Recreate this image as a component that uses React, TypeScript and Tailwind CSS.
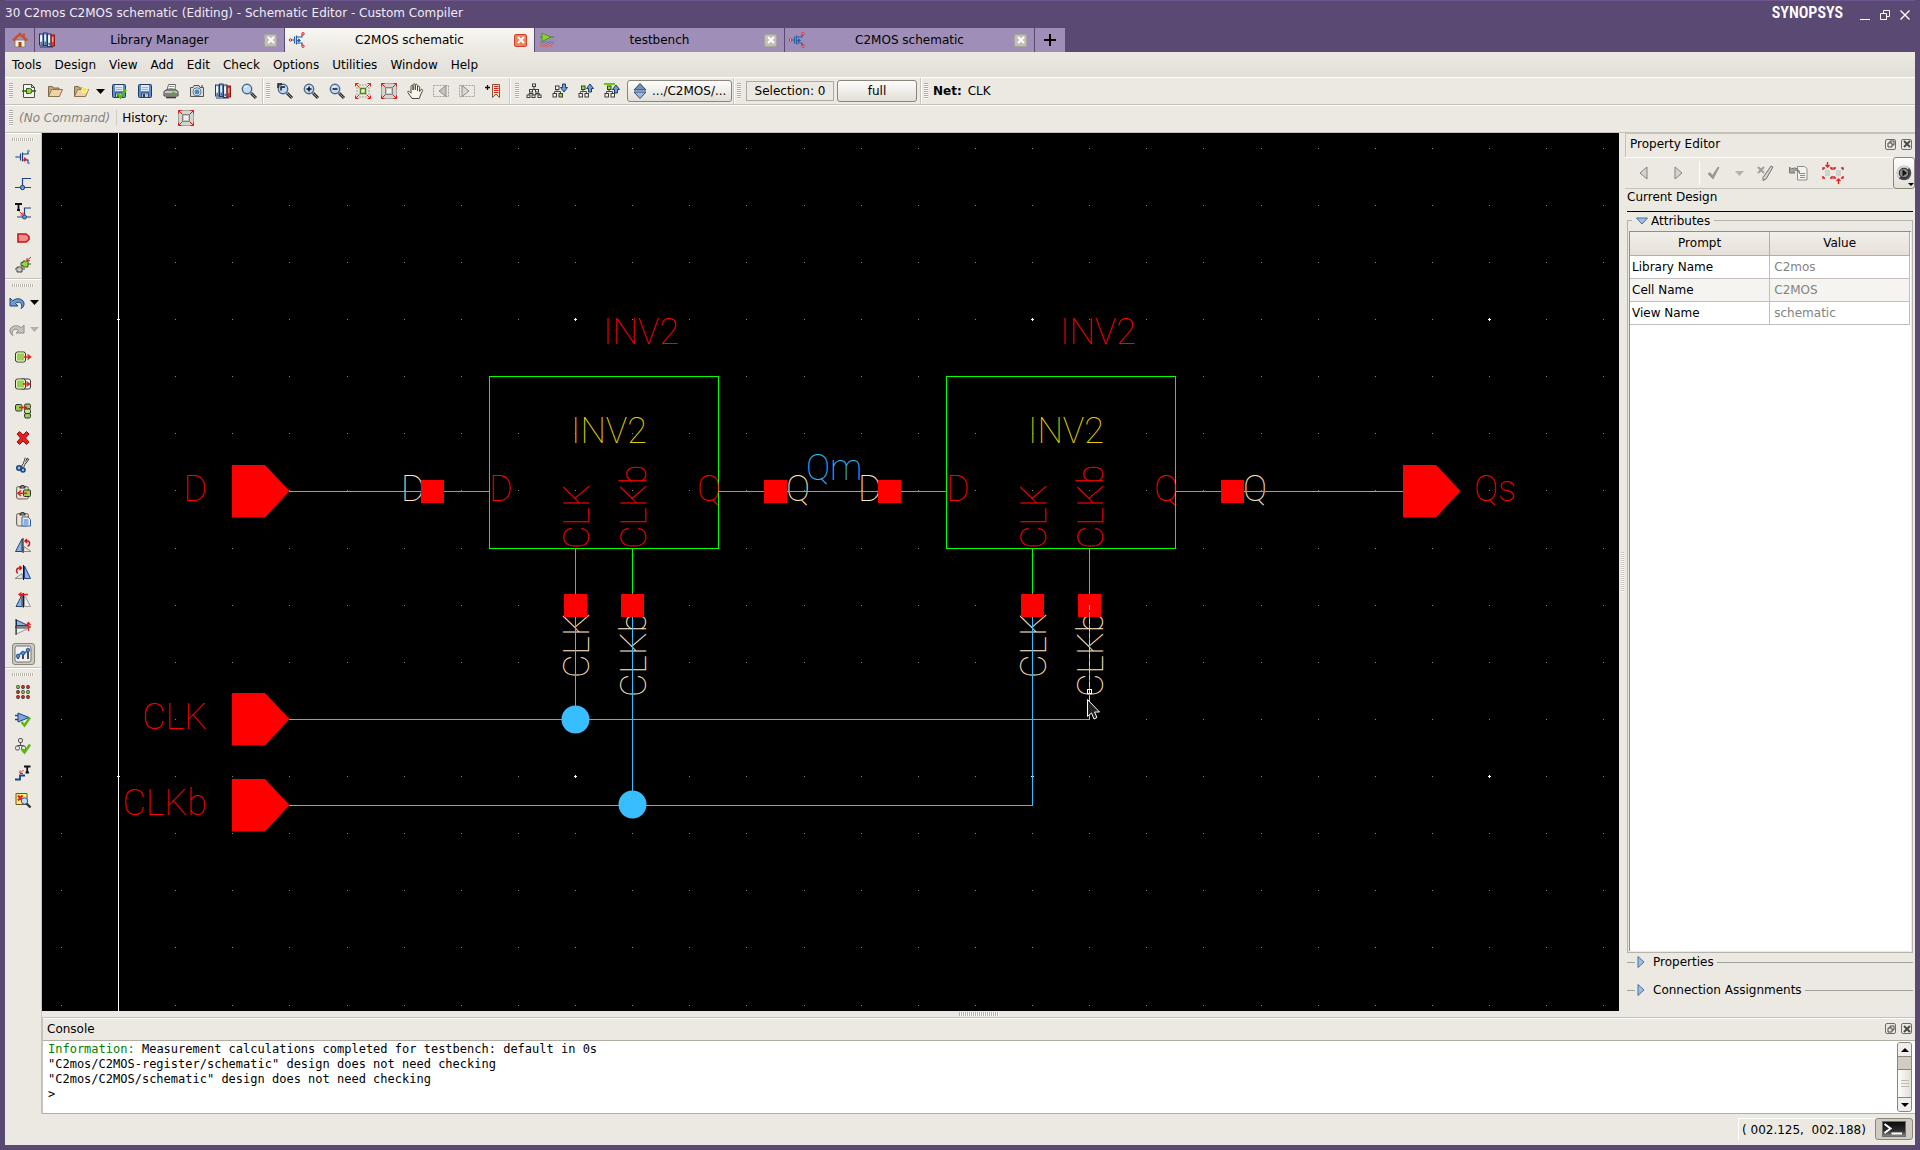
import React from "react";

type Node = React.ReactNode;

/* ---------- icon building blocks ---------- */

const folder = (
  <>
    <path d="M1.5 13.5v-10h4l1 1.5h5.5v2" fill="#c9a877" stroke="#7a6a52" />
    <path d="M1.5 13.5l3-7h11l-3 7z" fill="#f0d3a4" stroke="#8a7353" />
  </>
);
const floppy = (
  <>
    <rect x="1.5" y="1.5" width="13" height="13" rx="1" fill="#5f8fca" stroke="#1f3c66" />
    <rect x="4" y="2" width="8" height="6" fill="#dfe9f5" />
    <path d="M5 4.500h6M5 6.500h6" stroke="#9db4d0" />
    <rect x="4.500" y="10" width="7" height="4.500" fill="#bfc7d2" stroke="#2b4a78" />
    <rect x="6" y="11" width="2" height="3" fill="#2b3a52" />
  </>
);
const lens = (
  <>
    <path d="M10 10l5 5" stroke="#2b2b2b" strokeWidth="3" />
    <path d="M10 10l5 5" stroke="#9a9a9a" strokeWidth="1" />
    <circle cx="6" cy="6" r="4.700" fill="#c3dbf5" stroke="#4a6890" strokeWidth="1.400" />
    <path d="M3.500 5a3 3 0 0 1 3-2" stroke="#ffffff" fill="none" />
  </>
);
const cornerArrows = (
  <path
    d="M.500 3.500V.500h3M1 1l3.500 3.500M12.500.500h3v3M15 1l-3.500 3.500M.500 12.500v3h3M1 15l3.500-3.500M15.500 12.500v3h-3M15 15l-3.500-3.500"
    stroke="#e01818"
    fill="none"
  />
);
const books = (
  <>
    <rect x=".5" y="2" width="3.500" height="11" fill="#c9d9ec" stroke="#1c3a66" />
    <rect x="4.500" y="1" width="3.500" height="12.500" fill="#8db0db" stroke="#1c3a66" />
    <rect x="8.500" y="2" width="3.500" height="12.500" fill="#c9d9ec" stroke="#1c3a66" />
    <rect x="12" y="3" width="3.500" height="11" fill="#e23a2a" stroke="#8c1a12" />
    <path d="M2.200 4v5M6.200 3v6M10.200 4v6" stroke="#ffffff" strokeWidth="1.400" />
    <path d="M2.200 10v2M6.200 10.500v2M10.200 11v2" stroke="#1c3a66" />
    <path d="M13.800 5v5" stroke="#ffc9c0" />
    <path d="M1 15h13" stroke="#1c3a66" />
  </>
);
const tree = (a: string, b: string) => (
  <>
    <path d="M5 5v3M2.500 11V8.500h6V11" fill="none" stroke="#4a4a4a" />
    <rect x="3.500" y="3" width="3.500" height="3.500" fill={a} stroke="#3d3d3d" />
    <rect x="1" y="10.500" width="3.500" height="3.500" fill="#f2f2f2" stroke="#3d3d3d" />
    <rect x="7" y="10.500" width="3.500" height="3.500" fill={b} stroke="#3d3d3d" />
  </>
);
const check = <path d="M6.500 11l3 3.500L15 6.500" fill="none" stroke="#57b80e" strokeWidth="2.400" />;
const clipboard = (
  <>
    <rect x="1.500" y="2.500" width="12" height="12.500" rx="2" fill="#e4c9ae" stroke="#6b6b6b" />
    <path d="M3 4h9v10H3z" fill="#f0e3d5" />
    <path d="M4.500 4.500V2.500l2-1.500h2l2 1.500v2z" fill="#3a3a3a" />
    <path d="M6.500 3h2" stroke="#ddd" />
  </>
);

const ICONS: Record<string, Node> = {
  home: (
    <>
      <path d="M3 8h10v7H3z" fill="#f3efe6" stroke="#8b8378" />
      <path d="M1 8.500L8 2l7 6.500" fill="none" stroke="#c8502b" strokeWidth="2.600" />
      <path d="M11 1.500h2V5h-2z" fill="#c8502b" />
      <path d="M6.500 10h3v5h-3z" fill="#a14a1c" />
    </>
  ),
  library: books,
  transistorTab: (
    <>
      <path d="M2 8h3M5.500 4.500v7M7.500 3.500v9M7.500 5H13V2.500M7.500 11H13v2.500" fill="none" stroke="#2a5ea6" strokeWidth="1.200" />
      <path d="M8 8.500h3M9.500 7l2 1.500-2 1.500z" stroke="#2a5ea6" fill="#2a5ea6" />
      <circle cx="1.500" cy="8" r="1.200" fill="#fff" stroke="#d81010" />
      <circle cx="14" cy="1.800" r="1.200" fill="#fff" stroke="#d81010" />
      <circle cx="14" cy="14.200" r="1.200" fill="#fff" stroke="#d81010" />
    </>
  ),
  testbench: (
    <>
      <path d="M1 5h14" stroke="#4c7a2d" />
      <path d="M3 1l9 4-9 4.500z" fill="#8ccf3a" stroke="#4f9320" />
      <path d="M1 10.500l2-1 2 1 2-1 2 1 2-1 2 1 2-1" fill="none" stroke="#5c7ca8" />
      <path d="M1 12.500l2-1 2 1 2-1 2 1 2-1 2 1 2-1M1 14.500l2-1 2 1 2-1 2 1 2-1 2 1" fill="none" stroke="#d9634c" />
    </>
  ),
  new: (
    <>
      <path d="M2.500 1.500h8l3 3v10h-11z" fill="#f5f5f0" stroke="#4d4d4d" />
      <path d="M10.500 1.500v3h3" fill="none" stroke="#4d4d4d" />
      <path d="M5.500 5.500h3a2.500 2.500 0 0 1 0 5h-3z" fill="#9ad14a" stroke="#2f5e10" />
      <path d="M1 8h4M11 8h4" stroke="#2f5e10" strokeWidth="1.400" />
    </>
  ),
  open: folder,
  openRecent: (
    <>
      {folder}
      <circle cx="11.500" cy="7" r="2.800" fill="#ffe14a" stroke="#fff7c0" />
    </>
  ),
  saveCheck: (
    <>
      {floppy}
      {check}
    </>
  ),
  save: floppy,
  print: (
    <>
      <path d="M4 7l1.500-5.500h7L12 7z" fill="#ffffff" stroke="#6a6a6a" />
      <path d="M6 3.500h5M5.500 5.500h5" stroke="#9a9a9a" />
      <path d="M1 8.500L3 7h10l2 1.500V13H1z" fill="#c8c8c4" stroke="#3a3a3a" />
      <path d="M2 11h12" stroke="#3a3a3a" />
      <path d="M3 14.500h10" stroke="#3a3a3a" strokeWidth="1.600" />
      <path d="M9 9.500h3" stroke="#5cb82a" strokeWidth="1.400" />
    </>
  ),
  camera: (
    <>
      <path d="M1.500 4.500H4l1-2h5l1 2h3.500v9h-13z" fill="#d9dcd8" stroke="#555" />
      <circle cx="8" cy="8.800" r="4" fill="#fff" stroke="#5b6f8a" />
      <circle cx="8" cy="8.800" r="2.600" fill="#4f87cc" />
      <path d="M12 3h2" stroke="#333" />
    </>
  ),
  books,
  search: lens,
  zoomArea: (
    <>
      {lens}
      <path d="M1 5V1h4M4 7.500V4h4" fill="none" stroke="#111" strokeWidth="1.400" />
    </>
  ),
  zoomIn: (
    <>
      {lens}
      <path d="M3.500 6h5M6 3.500v5" stroke="#111" strokeWidth="1.500" />
    </>
  ),
  zoomOut: (
    <>
      {lens}
      <path d="M3.500 6h5" stroke="#111" strokeWidth="1.500" />
    </>
  ),
  fitAll: (
    <>
      <path d="M2 4v8M14 4v8M4 2h8M4 14h8" stroke="#a9968a" strokeDasharray="2 1" />
      {cornerArrows}
      <rect x="5.500" y="5.500" width="5" height="5" fill="#f3f7ec" stroke="#4d8a17" strokeWidth="1.600" />
    </>
  ),
  fitSel: (
    <>
      <rect x=".5" y=".5" width="15" height="15" fill="#d6d4cf" stroke="#a5a39e" />
      {cornerArrows}
      <rect x="4.500" y="4.500" width="7" height="7" fill="#c9c7c2" stroke="#85837e" />
      <rect x="6" y="6" width="4" height="4" fill="#f2f2f0" />
    </>
  ),
  hand: (
    <path
      d="M5 15.500L.800 9.500c-.5-1 .8-1.900 1.700-.9L4 10.200V3.500c0-1.400 2-1.400 2.100 0V7V1.800c0-1.400 2.100-1.400 2.200 0v5V2.300c0-1.300 2.100-1.300 2.200 0V8V4.200c0-1.300 2.100-1.300 2.100 0V8.500l1.200-1.800c.8-1 2.200-.3 1.800.9L13.500 12l-1.200 3.500z"
      fill="#fbf5e9"
      stroke="#4f4a40"
    />
  ),
  prevView: (
    <>
      <path d="M.500 2.500h15v11H.500z" fill="none" stroke="#a5a39c" strokeDasharray="2 1" />
      <path d="M13 2.500v11L6 8z" fill="#c5c3bd" stroke="#8f8d87" />
    </>
  ),
  nextView: (
    <>
      <path d="M.500 2.500h15v11H.500z" fill="none" stroke="#a5a39c" strokeDasharray="2 1" />
      <path d="M3 2.500v11L10 8z" fill="#d9d7d1" stroke="#8f8d87" />
    </>
  ),
  bookmark: (
    <>
      <path d="M0 4.500h5M2.500 2v5" stroke="#111" strokeWidth="1.300" />
      <path d="M7.500 1.500h7v13L11 11l-3.500 3.500z" fill="#f6dfb8" stroke="#7d5530" />
      <path d="M9 3.500h4.500M9 5.500h4.500M9 7.500h4.500M9 9.500h4.500" stroke="#d81f1f" />
    </>
  ),
  hierarchy: (
    <g fill="#f2f2f2" stroke="#3d3d3d">
      <path d="M8 4v2M5 8V6.500h6V8M3 12v-1.500h4V12M11 10v2M9.500 12v-1.500h4V12" fill="none" />
      <rect x="6.500" y="1" width="3" height="2.500" />
      <rect x="3.500" y="6.500" width="3" height="2.500" />
      <rect x="9.500" y="6.500" width="3" height="2.500" />
      <rect x="1" y="12" width="3" height="2.500" />
      <rect x="6" y="12" width="3" height="2.500" />
      <rect x="12" y="12" width="3" height="2.500" />
    </g>
  ),
  descend: (
    <>
      {tree("#f2f2f2", "#8fe03a")}
      <path d="M10.500 1h3v3.500h2L12 9 8.500 4.500h2z" fill="#6f9fd8" stroke="#1f3c66" />
    </>
  ),
  ascend: (
    <>
      {tree("#8fe03a", "#f2f2f2")}
      <path d="M10.500 9h3V5.500h2L12 1 8.500 5.500h2z" fill="#6f9fd8" stroke="#1f3c66" />
    </>
  ),
  ascendTop: (
    <>
      <path d="M0 1h11" stroke="#6cc418" strokeWidth="2" />
      {tree("#8fe03a", "#f2f2f2")}
      <path d="M10.500 10h3V6.500h2L12 2 8.500 6.500h2z" fill="#6f9fd8" stroke="#1f3c66" />
    </>
  ),
  transistor: (
    <>
      <path d="M1 8h4M5.500 4.500v7M7.500 3.500v9M7.500 5H13V2M7.500 11H13v3" fill="none" stroke="#1d4382" strokeWidth="1.200" />
      <path d="M9 8v5l3.500-2.500z" fill="#e02020" />
      <circle cx="1.500" cy="8" r="1.300" fill="#7298c8" />
      <circle cx="13.500" cy="2" r="1.300" fill="#7298c8" />
      <circle cx="13.500" cy="14" r="1.300" fill="#7298c8" />
    </>
  ),
  wire: (
    <>
      <path d="M0 11.500h16M7.500 11V2.500H16" fill="none" stroke="#1d4382" strokeWidth="1.200" />
      <circle cx="7.500" cy="11.500" r="2.200" fill="#7298c8" stroke="#1d4382" />
    </>
  ),
  wireName: (
    <>
      <path d="M0 1h7M3.500 1v6M2 7h3" stroke="#111" strokeWidth="1.800" fill="none" />
      <path d="M2 14h14M9.500 13V5H16" fill="none" stroke="#1d4382" strokeWidth="1.200" />
      <path d="M4.500 8.500l3 3M8 9.500V12H5.500" stroke="#e02020" fill="none" />
      <circle cx="9.500" cy="14" r="2" fill="#7298c8" stroke="#1d4382" />
    </>
  ),
  pin: <path d="M3 4h8l3 2.500v3L11 12H3z" fill="#f08c8c" stroke="#c81414" strokeWidth="1.600" />,
  connector: (
    <>
      <path d="M6 5.500h2V4h5v6H8V8.500H6zM13 7h3" fill="#9ad14a" stroke="#33600f" />
      <path d="M0 12h2v-2h5v5H2v-2M7 12h3" fill="#c9c9c9" stroke="#444" />
      <path d="M16 0l-4 3.500M12 1v2.700h3" stroke="#e02020" fill="none" />
    </>
  ),
  undo: (
    <path d="M1 3v8h8L6.500 8.500c2-2 5-1.500 6 .5.600 1.500.3 3-.5 4.500 3-1.500 4-5 2-7.500C11.500 3 7 3 3.800 5.800z" fill="#6f9bd1" stroke="#1f4275" />
  ),
  redo: (
    <path d="M15 3v8H7l2.500-2.500c-2-2-5-1.500-6 .5-.6 1.500-.3 3 .5 4.500C1 12 0 8.500 2 6c2.500-3 7-3 10.200-.2z" fill="#c5c3bd" stroke="#8f8d87" />
  ),
  move: (
    <>
      <rect x=".5" y="3" width="10" height="10" rx="2" fill="#9ccf4e" stroke="#333" />
      <rect x="1.500" y="4" width="8" height="8" rx="1" stroke="#e4f2cc" />
      <path d="M9 8h6M12.500 5.500L15.500 8l-3 2.500" stroke="#e02020" fill="none" strokeWidth="1.400" />
    </>
  ),
  copy: (
    <>
      <rect x="5.500" y="3" width="10" height="10" rx="2" fill="#fff" stroke="#333" />
      <rect x=".5" y="3" width="10" height="10" rx="2" fill="#9ccf4e" stroke="#333" />
      <rect x="1.500" y="4" width="8" height="8" rx="1" stroke="#e4f2cc" />
      <path d="M8 8h6M11.500 5.500L14.500 8l-3 2.500" stroke="#e02020" fill="none" strokeWidth="1.400" />
    </>
  ),
  array: (
    <>
      <rect x=".5" y="1.500" width="6.500" height="6.500" rx="1.500" fill="#9ccf4e" stroke="#333" />
      <rect x="9.500" y="1" width="6" height="5" rx="1.500" fill="#9ccf4e" stroke="#333" />
      <rect x="9.500" y="6" width="6" height="4.500" rx="1.500" fill="#c5e49a" stroke="#333" />
      <rect x="9.500" y="10.500" width="6" height="4.500" rx="1.500" fill="#9ccf4e" stroke="#333" />
      <path d="M4 4.500h7M9 2.500l2.500 2L9 6.500" stroke="#e02020" fill="none" strokeWidth="1.300" />
    </>
  ),
  delete: (
    <path d="M2 4l2.500-2.500L8 5l3.500-3.500L14 4l-3.500 4L14 12l-2.500 2.500L8 11l-3.500 3.500L2 12l3.500-4z" fill="#e22020" stroke="#9e0e0e" />
  ),
  cut: (
    <>
      <path d="M13.500 1.500L6 11M11 1L8 10" stroke="#333" strokeWidth="2.400" />
      <path d="M13.500 1.500L6 11M11 1L8 10" stroke="#d7d7d7" strokeWidth="1" />
      <circle cx="4" cy="11" r="2.200" fill="#9bbce2" stroke="#1d4382" strokeWidth="1.600" />
      <circle cx="8" cy="13" r="2" fill="#9bbce2" stroke="#1d4382" strokeWidth="1.600" />
    </>
  ),
  clipCopy: (
    <>
      {clipboard}
      <rect x="8.500" y="6" width="7" height="6.500" rx="1" fill="#9ccf4e" stroke="#333" />
      <path d="M12 9.300H3M6 6.500L3 9.300l3 2.700" stroke="#e02020" fill="none" strokeWidth="1.500" />
    </>
  ),
  paste: (
    <>
      {clipboard}
      <path d="M7 6h6l2.500 2.500V15H7z" fill="#eef4fb" stroke="#2a5ea6" />
      <path d="M8.500 9h5M8.500 11h5M8.500 13h5" stroke="#2a6ac4" />
    </>
  ),
  rotateLeft: (
    <>
      <path d="M.500 13.500h6.500V1z" fill="#8fb3e0" stroke="#1d4382" />
      <path d="M8.500 13.500H16L9 8.500z" fill="#e6e6e6" stroke="#8a8a8a" />
      <path d="M8 0v15" stroke="#111" />
      <path d="M10 3h2.500c3 0 2.500 5 0 5M12 1l-2 2 2 2" stroke="#cc1414" fill="none" strokeWidth="1.500" />
    </>
  ),
  rotateRight: (
    <>
      <path d="M15.500 13.500H9.500V1z" fill="#8fb3e0" stroke="#1d4382" />
      <path d="M7.500 13.500H0l7-5z" fill="#e6e6e6" stroke="#8a8a8a" />
      <path d="M8.500 0v15" stroke="#111" />
      <path d="M6.500 3H4C1 3 1 8 3 8M4.500 1l2 2-2 2" stroke="#cc1414" fill="none" strokeWidth="1.500" />
    </>
  ),
  flipH: (
    <>
      <path d="M1 14.500h6V3z" fill="#8fb3e0" stroke="#1d4382" />
      <path d="M15.500 14.500h-6V3z" fill="#eee" stroke="#9a9a9a" />
      <path d="M8.300 1v14.500" stroke="#111" strokeWidth="1.300" />
      <path d="M13 2.500H4M6.500.5L4 2.500l2.500 2" stroke="#e02020" fill="none" strokeWidth="1.300" />
    </>
  ),
  flipV: (
    <>
      <path d="M1.500 1v5.500H13z" fill="#8fb3e0" stroke="#1d4382" />
      <path d="M1.500 15V9.500H13z" fill="#eee" stroke="#9a9a9a" />
      <path d="M0 8h16M1 0v16" stroke="#111" />
      <path d="M13.500 12V4M11.500 6l2-2.500 2 2.500" stroke="#e02020" fill="none" strokeWidth="1.300" />
    </>
  ),
  sliders: (
    <>
      <rect x="0" y="0" width="16" height="16" rx="2" fill="#eef0f2" stroke="#777" />
      <path d="M3 8v5M8 5v8M13 3v10" stroke="#222" strokeWidth="1.600" />
      <path d="M2 11l4-4 3 1 5-5" stroke="#2a5ea6" fill="none" strokeWidth="1.500" />
      <circle cx="3" cy="10" r="1.800" fill="#5e88bc" stroke="#2a5ea6" />
      <circle cx="8" cy="7" r="1.800" fill="#5e88bc" stroke="#2a5ea6" />
      <circle cx="13" cy="4" r="1.800" fill="#5e88bc" stroke="#2a5ea6" />
    </>
  ),
  dots: (
    <>
      {[3, 8, 13].map((y, r) =>
        [3, 8, 13].map((x, c) => (
          <g key={`${x}-${y}`}>
            <circle cx={x} cy={y} r="1.900" fill="#333" />
            <circle cx={x} cy={y} r="1.300" fill={(r === 0 && c === 0) || (r === 1 && c > 0) ? "#6cc430" : "#e02020"} />
          </g>
        )),
      )}
    </>
  ),
  checkGate: (
    <>
      <path d="M3 2l11 4.500L3 11z" fill="#7ba6dc" stroke="#1d4382" />
      <path d="M0 4.500h3M0 8.500h3" stroke="#1d4382" strokeWidth="1.500" />
      {check}
    </>
  ),
  checkTree: (
    <>
      <path d="M5.500 4v3M2.500 9V7.500h6V9" stroke="#555" fill="none" />
      <rect x="3.500" y=".5" width="4" height="4" rx="1.500" fill="#e8e8e8" stroke="#555" />
      <rect x=".5" y="8" width="4" height="4" rx="1.500" fill="#e8e8e8" stroke="#555" />
      <rect x="6.500" y="8" width="4" height="4" rx="1.500" fill="#e8e8e8" stroke="#555" />
      {check}
    </>
  ),
  netName: (
    <>
      <path d="M0 14.500h5v-4h5" stroke="#1d4382" fill="none" strokeWidth="1.800" />
      <path d="M9 1.500h6.500M12.200 1.500v6M10.500 7.500h3.500" stroke="#111" fill="none" strokeWidth="1.800" />
      <path d="M8.500 5L5.500 8M5 5.500v3h3" stroke="#e02020" fill="none" />
    </>
  ),
  markers: (
    <>
      <path d="M1 1.500h11v11H1z" fill="#fff07a" stroke="#6b5a1c" />
      <path d="M3 3.500l4.500 5M7.500 3.500L3 8.500" stroke="#e02020" strokeWidth="2" />
      <path d="M11 11l4.500 4.500" stroke="#333" strokeWidth="2.400" />
      <circle cx="9.500" cy="9" r="3.200" fill="#c3dbf5" stroke="#31588f" />
    </>
  ),
  updown: (
    <>
      <path d="M8 .5L14 7H2z" fill="#6d8fbd" stroke="#2b456e" />
      <path d="M8 15.500L14 9H2z" fill="#9dbbe2" stroke="#2b456e" />
    </>
  ),
  back: <path d="M11 2v12L4 8z" fill="#d5d3ce" stroke="#85837e" />,
  forward: <path d="M5 2v12l7-6z" fill="#d5d3ce" stroke="#85837e" />,
  apply: <path d="M3 9l2-1.500 2.500 3L13 2l1 .5L8 14z" fill="#9a9892" stroke="#8a8882" strokeWidth=".6" />,
  discard: (
    <>
      <path d="M1 2l6 6M7 2L1 8" stroke="#a09e98" strokeWidth="2" />
      <path d="M14 1l2 1-7 12-3 1.500 0-3z" fill="#d5d3ce" stroke="#74726d" />
    </>
  ),
  revert: (
    <>
      <path d="M6.500 1.500h7l2.500 2V15H6.500z" fill="#f3f2ee" stroke="#8f8d87" />
      <path d="M9 8.500h5M9 10.500h5M9 12.500h5" stroke="#8f8d87" />
      <path d="M-1.500 2v6h5.500L2.500 6.500c3-2 5-1 6 2C8.500 4 4.500 1.500.500 4z" fill="#a8a69f" stroke="#77756f" />
    </>
  ),
  options: (
    <>
      <circle cx="8" cy="8" r="7.300" fill="#4a4a4a" />
      <path d="M2.800 13.200A7.300 7.300 0 0 1 13.200 2.800z" fill="#d6d6d6" />
      <circle cx="8" cy="8" r="4.800" fill="#8a8a8a" stroke="#222" />
      <path d="M6.500 4.500v7l4.500-3.500z" fill="#111" />
    </>
  ),
};

function Icon({ name }: { name: string }) {
  return (
    <svg viewBox="0 0 16 16" className="size-4 shrink-0 overflow-visible" fill="none" aria-hidden="true">
      {ICONS[name]}
    </svg>
  );
}

function IconButton({ name, label }: { name: string; label: string }) {
  return (
    <button aria-label={label} className="flex h-6 w-[26px] shrink-0 items-center justify-center">
      <Icon name={name} />
    </button>
  );
}

function Caret({ muted }: { muted?: boolean }) {
  return (
    <svg viewBox="0 0 9 5" className={muted ? "h-[5px] w-[9px] text-[#b3b1ab]" : "h-[5px] w-[9px] text-black"} aria-hidden="true">
      <path d="M0 0h9L4.500 5z" fill="currentColor" />
    </svg>
  );
}

/* ---------- small chrome pieces ---------- */

function GripV() {
  return (
    <div className="h-4 w-1 shrink-0 bg-[repeating-linear-gradient(to_bottom,#aeaca5_0px,#aeaca5_1px,#fbfaf7_1px,#fbfaf7_2px)]" />
  );
}
function GripH({ wide }: { wide?: boolean }) {
  return (
    <div
      className={
        (wide ? "h-1 w-10" : "h-[3px] w-[22px]") +
        " shrink-0 bg-[repeating-linear-gradient(to_right,#b5b3ac_0px,#b5b3ac_1px,#fbfaf7_1px,#fbfaf7_2px)]"
      }
    />
  );
}
const VLine = () => <div className="w-[2px] shrink-0 self-stretch border-l border-[#c9c7c0] bg-white" />;

function DockButtons() {
  const cls = "flex size-[11px] items-center justify-center rounded-[2px] border border-[#6e6c67] text-[#4c4a46]";
  return (
    <div className="flex items-center gap-[5px] pr-[3px]">
      <button aria-label="Float" className={cls}>
        <svg viewBox="0 0 8 8" className="size-2" fill="none" stroke="currentColor" aria-hidden="true">
          <path d="M3 3V1h4v4H5M1 3h4v4H1z" />
        </svg>
      </button>
      <button aria-label="Close" className={cls}>
        <svg viewBox="0 0 8 8" className="size-2" fill="none" stroke="currentColor" strokeWidth="2" aria-hidden="true">
          <path d="M1 1l6 6M7 1L1 7" />
        </svg>
      </button>
    </div>
  );
}

/* ---------- title, tabs, menu ---------- */

function TitleBar() {
  return (
    <header className="flex h-7 shrink-0 items-start justify-between border-t border-[#6d568f] text-white">
      <h1 className="pt-1 text-xs leading-4 whitespace-pre text-[#efecf5]">
        30 C2mos C2MOS schematic (Editing) - Schematic Editor - Custom Compiler
      </h1>
      <div className="flex items-start">
        <span className="mr-4 font-['Roboto_Condensed'] text-base leading-6 font-semibold">SYNOPSYS</span>
        <div className="flex gap-2 pt-2 pr-1">
          <button aria-label="Minimize">
            <svg viewBox="0 0 12 12" className="size-3" stroke="white" fill="none" aria-hidden="true">
              <path d="M1 10.500h10" />
            </svg>
          </button>
          <button aria-label="Restore">
            <svg viewBox="0 0 12 12" className="size-3" stroke="white" fill="none" aria-hidden="true">
              <path d="M4.500 4V1.500h6v6H8M1.500 4.500h6v6h-6z" />
            </svg>
          </button>
          <button aria-label="Close window">
            <svg viewBox="0 0 12 12" className="size-3" stroke="white" strokeWidth="1.400" fill="none" aria-hidden="true">
              <path d="M1.500 1.500l9 9M10.500 1.500l-9 9" />
            </svg>
          </button>
        </div>
      </div>
    </header>
  );
}

const TABS = [
  { icon: "library", label: "Library Manager", active: false },
  { icon: "transistorTab", label: "C2MOS schematic", active: true },
  { icon: "testbench", label: "testbench", active: false },
  { icon: "transistorTab", label: "C2MOS schematic", active: false },
];

function Tabs() {
  return (
    <nav className="flex h-6 shrink-0 gap-px">
      <button aria-label="Home" className="flex w-[29px] items-center justify-center bg-[#9f8fb8]">
        <Icon name="home" />
      </button>
      {TABS.map((t, i) => (
        <div
          key={i}
          className={
            "flex w-[249px] items-center pr-[7px] pl-1 " +
            (t.active ? "bg-gradient-to-b from-[#f8f6f2] to-[#ece9e2]" : "bg-[#9f8fb8]")
          }
        >
          <Icon name={t.icon} />
          <button className="flex-1 text-center text-xs">{t.label}</button>
          <button
            aria-label={`Close ${t.label}`}
            className={
              "flex size-[13px] items-center justify-center rounded-[2px] border " +
              (t.active ? "border-[#d8402a] bg-[#e88560]" : "border-[#a8a49c] bg-[#c2beba]")
            }
          >
            <svg viewBox="0 0 8 8" className="size-2" stroke="white" strokeWidth="2" aria-hidden="true">
              <path d="M1 1l6 6M7 1L1 7" />
            </svg>
          </button>
        </div>
      ))}
      <button aria-label="New tab" className="flex w-[30px] items-center justify-center bg-[#9f8fb8]">
        <svg viewBox="0 0 12 12" className="size-3" stroke="black" strokeWidth="2" aria-hidden="true">
          <path d="M0 6h12M6 0v12" />
        </svg>
      </button>
    </nav>
  );
}

const MENUS = ["Tools", "Design", "View", "Add", "Edit", "Check", "Options", "Utilities", "Window", "Help"];

function MenuBar() {
  return (
    <nav className="flex h-[25px] shrink-0 items-center gap-[13px] bg-gradient-to-b from-[#ece9e2] to-[#e2dfd8] pl-[7px] text-xs">
      {MENUS.map((m) => (
        <button key={m}>{m}</button>
      ))}
    </nav>
  );
}

/* ---------- toolbars ---------- */

const FACE = "rounded-[3px] border border-[#8b867c] bg-gradient-to-b from-[#fdfdfb] to-[#e2dfd7]";

function MainToolbar() {
  return (
    <div className="flex h-7 shrink-0 items-center border-t border-b border-t-white border-b-[#c4c2bb] text-xs">
      <div className="flex h-full items-center pl-1">
        <GripV />
        <div className="w-[3px]" />
        <IconButton name="new" label="New" />
        <IconButton name="open" label="Open" />
        <IconButton name="openRecent" label="Open recent" />
        <button aria-label="Recent files" className="flex h-6 w-3 items-center justify-center">
          <Caret />
        </button>
        <IconButton name="saveCheck" label="Check and save" />
        <IconButton name="save" label="Save" />
        <IconButton name="print" label="Print" />
        <IconButton name="camera" label="Capture" />
        <IconButton name="books" label="Libraries" />
        <IconButton name="search" label="Find" />
        <VLine />
      </div>
      <div className="flex h-full items-center pl-[2px]">
        <GripV />
        <div className="w-[2px]" />
        <IconButton name="zoomArea" label="Zoom area" />
        <IconButton name="zoomIn" label="Zoom in" />
        <IconButton name="zoomOut" label="Zoom out" />
        <IconButton name="fitAll" label="Fit all" />
        <IconButton name="fitSel" label="Fit selected" />
        <IconButton name="hand" label="Pan" />
        <IconButton name="prevView" label="Previous view" />
        <IconButton name="nextView" label="Next view" />
        <IconButton name="bookmark" label="Add bookmark" />
        <div className="w-[3px]" />
        <VLine />
      </div>
      <div className="flex h-full items-center pl-1">
        <GripV />
        <div className="w-[2px]" />
        <IconButton name="hierarchy" label="Hierarchy" />
        <IconButton name="descend" label="Descend" />
        <IconButton name="ascend" label="Ascend" />
        <IconButton name="ascendTop" label="Ascend to top" />
        <button className={"mr-px ml-[2px] flex h-[22px] w-[105px] items-center gap-1 pl-1 " + FACE}>
          <Icon name="updown" />
          .../C2MOS/...
        </button>
        <VLine />
      </div>
      <div className="flex h-full items-center pl-[2px]">
        <GripV />
        <output className="ml-[5px] flex h-5 w-[88px] items-center justify-center border border-[#aeaaa0]">Selection: 0</output>
        <button className={"mx-[3px] h-[22px] w-20 " + FACE}>full</button>
        <VLine />
      </div>
      <div className="flex h-full items-center pl-[2px]">
        <GripV />
        <b className="mr-[6px] ml-[5px]">Net:</b>
        <span>CLK</span>
      </div>
    </div>
  );
}

function CommandBar() {
  return (
    <div className="flex h-7 shrink-0 items-center border-t border-b border-t-white border-b-[#c4c2bb] pb-[2px] pl-1 text-xs">
      <GripV />
      <i className="mr-[6px] ml-[6px] text-[#85837e]">(No Command)</i>
      <div className="h-4 w-px bg-[#cfcdc6]" />
      <span className="ml-[5px]">History:</span>
      <div className="w-[5px]" />
      <IconButton name="fitSel" label="Fit selected" />
    </div>
  );
}

const SIDE_GROUPS = [
  ["transistor", "wire", "wireName", "pin", "connector"],
  ["undo", "redo", "move", "copy", "array", "delete", "cut", "clipCopy", "paste", "rotateLeft", "rotateRight", "flipH", "flipV", "sliders"],
  ["dots", "checkGate", "checkTree", "netName", "markers"],
];

function SideToolbar() {
  return (
    <aside className="flex w-[37px] shrink-0 flex-col border-r border-[#c4c2bb]">
      {SIDE_GROUPS.map((g, gi) => (
        <div key={gi} className="flex flex-col items-center border-t border-b border-t-white border-b-[#c4c2bb] pt-1 last:border-b-0">
          <GripH />
          <div className="h-[2px]" />
          {g.map((n) => {
            const drop = n === "undo" || n === "redo";
            return (
              <div key={n} className="flex h-[27px] items-center justify-center">
                <button
                  aria-label={n}
                  className={
                    "flex h-[22px] items-center justify-center " +
                    (n === "sliders" ? "w-[23px] rounded-[3px] border border-[#8b867c] bg-[#d0cbc1]" : "w-[22px]")
                  }
                >
                  <Icon name={n} />
                </button>
                {drop && (
                  <button aria-label={`${n} list`} className="flex h-5 w-3 items-center justify-center">
                    <Caret muted={n === "redo"} />
                  </button>
                )}
              </div>
            );
          })}
        </div>
      ))}
    </aside>
  );
}

/* ---------- schematic canvas ---------- */

const RED = "#ff0000";
const GREEN = "#00ff00";
const NET = "#38bdff";
const PALE = "#ffe4c0";
const PITCH = 57.125;

function Label({ x, y, fill, children, end, up }: { x: number; y: number; fill: string; children: string; end?: boolean; up?: boolean }) {
  return (
    <text
      x={x}
      y={y}
      fill={fill}
      textAnchor={end ? "end" : "start"}
      transform={up ? `rotate(-90 ${x} ${y})` : undefined}
      className="font-['Roboto'] text-[36px] font-thin"
    >
      {children}
    </text>
  );
}

const Pad = ({ x, y }: { x: number; y: number }) => <rect x={x - 11} y={y - 11} width={23} height={23} fill={RED} />;
const Port = ({ x, y }: { x: number; y: number }) => (
  <path d={`M${x} ${y - 26}h33l24.500 26-24.500 26.500h-33z`} fill={RED} shapeRendering="auto" />
);
const HWire = ({ x1, x2, y, c }: { x1: number; x2: number; y: number; c: string }) => (
  <rect x={x1} y={y} width={x2 - x1} height={1} fill={c} />
);
const VWire = ({ x, y1, y2, c }: { x: number; y1: number; y2: number; c: string }) => (
  <rect x={x} y={y1} width={1} height={y2 - y1} fill={c} />
);

function Inverter({ x }: { x: number }) {
  return (
    <g>
      <Label x={x + 114} y={344} fill={RED}>INV2</Label>
      <Label x={x + 82} y={443} fill="#e0d000">INV2</Label>
      <rect x={x + 0.5} y={376.5} width={229} height={172} fill="none" stroke={GREEN} />
      <Label x={x} y={501} fill={RED}>D</Label>
      <Label x={x + 208} y={501} fill={RED}>Q</Label>
      <Label x={x + 100} y={549} fill={RED} up>CLK</Label>
      <Label x={x + 157} y={549} fill={RED} up>CLKb</Label>
      <Label x={x + 100} y={678} fill={PALE} up>CLK</Label>
      <Label x={x + 157} y={697} fill={PALE} up>CLKb</Label>
      <Label x={x - 88} y={501} fill={PALE}>D</Label>
      <Label x={x + 297} y={501} fill={PALE}>Q</Label>
      <HWire x1={x - 45} x2={x} y={491} c={GREEN} />
      <HWire x1={x + 230} x2={x + 275} y={491} c={GREEN} />
      <VWire x={x + 86} y1={549} y2={594} c={GREEN} />
      <VWire x={x + 143} y1={549} y2={594} c={GREEN} />
    </g>
  );
}

function Pads({ x }: { x: number }) {
  return (
    <g>
      <Pad x={x - 57} y={491} />
      <Pad x={x + 286} y={491} />
      <Pad x={x + 86} y={605} />
      <Pad x={x + 143} y={605} />
    </g>
  );
}

function GridDots() {
  const dots: Node[] = [];
  for (let r = -3; r < 13; r++) {
    for (let c = -1; c < 27; c++) {
      const x = Math.round(118 + c * PITCH);
      const y = Math.round(319 + r * PITCH);
      const major = c % 8 === 0 && r % 8 === 0;
      dots.push(
        major ? (
          <path key={`${r}:${c}`} d={`M${x - 1} ${y}h3v1h-3zM${x} ${y - 1}h1v3h-1z`} fill="#fff" />
        ) : (
          <rect key={`${r}:${c}`} x={x} y={y} width={1} height={1} fill="#85868f" />
        ),
      );
    }
  }
  return <g>{dots}</g>;
}

function Canvas() {
  return (
    <main className="relative min-w-0 flex-1 overflow-hidden bg-black">
      <svg className="absolute inset-0 size-full" shapeRendering="crispEdges" role="img" aria-label="C2MOS schematic">
        <g transform="translate(-42 -133)">
          <GridDots />
          <rect x={118} y={133} width={1} height="100%" fill="#fff" />
          <Inverter x={489} />
          <Inverter x={946} />
          <Label x={806} y={480} fill={NET}>Qm</Label>
          <Label x={207} y={501} fill={RED} end>D</Label>
          <Label x={207} y={729} fill={RED} end>CLK</Label>
          <Label x={207} y={815} fill={RED} end>CLKb</Label>
          <Label x={1474} y={501} fill={RED}>Qs</Label>
          <HWire x1={289} x2={421} y={491} c={NET} />
          <HWire x1={787} x2={878} y={491} c={NET} />
          <HWire x1={1244} x2={1403} y={491} c={NET} />
          <HWire x1={289} x2={1090} y={719} c={NET} />
          <HWire x1={289} x2={1033} y={805} c={NET} />
          <VWire x={575} y1={617} y2={719} c={NET} />
          <VWire x={632} y1={617} y2={805} c={NET} />
          <VWire x={1032} y1={617} y2={805} c={NET} />
          <VWire x={1089} y1={617} y2={719} c={NET} />
          <Pads x={489} />
          <Pads x={946} />
          <path d="M1089.500 605v114" stroke="#d8c8c8" strokeDasharray="5 2" />
          <Port x={232} y={491} />
          <Port x={232} y={719} />
          <Port x={232} y={805} />
          <Port x={1403} y={491} />
          <circle cx={575.5} cy={719.5} r={14} fill={NET} shapeRendering="auto" />
          <circle cx={632.5} cy={804.5} r={14} fill={NET} shapeRendering="auto" />
          <rect x={1087.5} y={689.5} width={4} height={4} fill="none" stroke="#fff" />
          <path d="M1087.500 699.500v17l4-3.500 2.500 6 3-1.500-2.500-5.500h5z" fill="#222" stroke="#fff" shapeRendering="auto" />
        </g>
      </svg>
    </main>
  );
}

/* ---------- property editor ---------- */

const ATTRIBUTES = [
  ["Library Name", "C2mos"],
  ["Cell Name", "C2MOS"],
  ["View Name", "schematic"],
];

function Triangle({ open }: { open?: boolean }) {
  return (
    <svg viewBox="0 0 12 12" className="size-3" aria-hidden="true">
      <path d={open ? "M.5 3h11L6 9z" : "M3 .5v11L9 6z"} fill="#9fc0e6" stroke="#4c6c98" />
    </svg>
  );
}

function Section({ title }: { title: string }) {
  return (
    <button className="flex h-[18px] w-full items-center">
      <span className="w-2 border-t border-[#a3a19b]" />
      <span className="flex items-center gap-[6px] pr-[3px]">
        <Triangle />
        <span>{title}</span>
      </span>
      <span className="flex-1 border-t border-[#a3a19b]" />
    </button>
  );
}

function PropertyEditor() {
  return (
    <aside className="flex w-[290px] shrink-0 flex-col text-xs">
      <div className="flex h-6 shrink-0 items-center justify-between border-t border-l border-[#c4c2bb] pb-[3px] pl-1">
        <h2>Property Editor</h2>
        <DockButtons />
      </div>
      <div className="flex h-8 shrink-0 items-center justify-between">
        <div className="flex h-full flex-1 items-center gap-2 border-t border-b border-t-white border-b-[#c4c2bb] pl-[6px]">
          <IconButton name="back" label="Previous object" />
          <IconButton name="forward" label="Next object" />
          <div className="flex items-center border-l border-white">
            <IconButton name="apply" label="Apply" />
            <button aria-label="Apply options" className="flex h-6 w-[26px] items-center justify-center">
              <Caret muted />
            </button>
            <IconButton name="discard" label="Discard" />
          </div>
          <IconButton name="revert" label="Revert" />
          <button aria-label="Select between" className="flex h-6 w-[26px] items-center justify-center">
            <svg viewBox="0 0 22 22" className="size-[22px] shrink-0" fill="none" aria-hidden="true">
              <path d="M1 8V6h2M8 6h2v2M1 14v2h2M8 16h2v-2M12 8V6h2M19 6h2v2M12 14v2h2M19 16h2v-2" stroke="#e01818" strokeWidth="1.400" />
              <rect x="3" y="8" width="5" height="6" fill="#cdd3cd" />
              <rect x="14" y="8" width="5" height="6" fill="#cdd3cd" />
              <path d="M5.500 0v5M3.500 3l2 2 2-2M16.500 22v-5M14.500 19l2-2 2 2" stroke="#f02020" strokeWidth="1.400" />
            </svg>
          </button>
        </div>
        <button aria-label="Options" className={"flex h-8 w-[22px] flex-col items-center justify-end pb-[2px] " + FACE}>
          <Icon name="options" />
          <svg viewBox="0 0 6 3" className="mt-[2px] h-[3px] w-[6px] self-end" aria-hidden="true">
            <path d="M0 0h6L3 3z" />
          </svg>
        </button>
      </div>
      <p className="mx-[2px] h-[23px] shrink-0 border-b border-black leading-4">Current Design</p>
      <div className="relative mx-[2px] mt-2 flex flex-1 flex-col border border-[#b5b3ac] px-px pt-[10px] pb-px">
        <button className="absolute -top-2 left-1 flex items-center gap-[3px] bg-[#ece9e2] px-1">
          <Triangle open />
          Attributes
        </button>
        <div className="flex-1 border-t border-l border-[#8f8d87] bg-white pr-px">
          <table className="w-full table-fixed border-collapse">
            <thead>
              <tr className="h-[23px] bg-gradient-to-b from-[#f1efe9] to-[#e6e0d9]">
                <th className="border-r border-b border-[#b5aca4] font-normal">Prompt</th>
                <th className="border-r border-b border-[#b5aca4] font-normal">Value</th>
              </tr>
            </thead>
            <tbody>
              {ATTRIBUTES.map(([k, v]) => (
                <tr key={k} className="h-[23px] even:bg-[#f5f4f0]">
                  <td className="border-r border-b border-[#c1bfb9] pl-[2px]">{k}</td>
                  <td className="border-r border-b border-[#c1bfb9] pl-1 text-[#85837e]">{v}</td>
                </tr>
              ))}
            </tbody>
          </table>
        </div>
      </div>
      <div className="mr-[2px] ml-[2px] flex shrink-0 flex-col gap-[10px] pb-3">
        <Section title="Properties" />
        <Section title="Connection Assignments" />
      </div>
    </aside>
  );
}

/* ---------- console and status ---------- */

function Console() {
  return (
    <section className="flex h-[97px] shrink-0 flex-col border-t border-l border-[#c4c2bb]">
      <div className="flex h-[22px] shrink-0 items-center justify-between border-t border-white pb-[2px] pl-1 text-xs">
        <h2>Console</h2>
        <DockButtons />
      </div>
      <div className="flex min-h-0 flex-1 border-t border-b border-[#b0aea5] bg-white">
        <div className="min-w-0 flex-1 pt-px pl-[5px] font-['DejaVu_Sans_Mono'] text-xs leading-[15px]">
          <p>
            <span className="text-[#008000]">Information:</span> Measurement calculations completed for testbench: default in 0s
          </p>
          <p>"C2mos/C2MOS-register/schematic" design does not need checking</p>
          <p>"C2mos/C2MOS/schematic" design does not need checking</p>
          <label className="flex">
            &gt;
            <input aria-label="Console command" className="h-[15px] flex-1 outline-none" />
          </label>
        </div>
        <div className="m-px mr-[3px] flex w-[15px] flex-col overflow-hidden rounded-[3px] border border-[#8b867c] bg-[#d3ccc0]">
          <button aria-label="Scroll up" className="flex h-[14px] items-center justify-center border-b border-[#8b867c] bg-[#f0eeea]">
            <svg viewBox="0 0 8 4" className="h-1 w-2" aria-hidden="true">
              <path d="M0 4l4-4 4 4z" />
            </svg>
          </button>
          <div className="flex-1" />
          <div className="flex h-7 flex-col items-center justify-center gap-[2px] border-t border-[#8b867c] bg-gradient-to-r from-[#fdfdfb] to-[#e2dfd7]">
            <span className="h-px w-2 bg-[#bdb9b0]" />
            <span className="h-px w-2 bg-[#bdb9b0]" />
            <span className="h-px w-2 bg-[#bdb9b0]" />
          </div>
          <button aria-label="Scroll down" className="flex h-[14px] items-center justify-center border-t border-[#8b867c] bg-[#f0eeea]">
            <svg viewBox="0 0 8 4" className="h-1 w-2" aria-hidden="true">
              <path d="M0 0l4 4 4-4z" />
            </svg>
          </button>
        </div>
      </div>
    </section>
  );
}

function StatusBar() {
  return (
    <footer className="flex h-[31px] shrink-0 items-center justify-end pr-[2px] pb-px">
      <output className="flex h-[22px] w-[137px] items-center border-t border-l border-white pl-[3px] text-xs whitespace-pre">
        ( 002.125,  002.188)
      </output>
      <button aria-label="Terminal" className="flex h-[22px] w-[38px] items-center justify-center rounded-[3px] border border-[#8b867c] bg-[#d0cbc1]">
        <svg viewBox="0 0 24 16" className="h-4 w-6" aria-hidden="true">
          <defs>
            <linearGradient id="screen" x1="0" y1="0" x2="0" y2="1">
              <stop offset="0" stopColor="#0a0a0a" />
              <stop offset="0.600" stopColor="#2c2c2c" />
              <stop offset="1" stopColor="#8a8a8a" />
            </linearGradient>
          </defs>
          <rect x=".5" y=".5" width="23" height="15" fill="url(#screen)" stroke="#6d6d6d" />
          <path d="M2.500 3l6 4.500-6 4.500M9.500 12.500H20" fill="none" stroke="#fff" strokeWidth="2" />
        </svg>
      </button>
    </footer>
  );
}

export default function App() {
  return (
    <div className="flex h-screen flex-col overflow-hidden bg-[#5a4973] px-[5px] pb-[5px] font-['DejaVu_Sans',sans-serif] text-black">
      <TitleBar />
      <Tabs />
      <div className="flex min-h-0 flex-1 flex-col bg-[#ece9e2]">
        <MenuBar />
        <MainToolbar />
        <CommandBar />
        <div className="flex min-h-0 flex-1">
          <SideToolbar />
          <div className="flex min-w-0 flex-1 flex-col">
            <div className="flex min-h-0 flex-1">
              <Canvas />
              <div className="flex w-[6px] shrink-0 items-center justify-center">
                <div className="h-10 w-[3px] bg-[repeating-linear-gradient(to_bottom,#c9c7c0_0px,#c9c7c0_1px,#fbfaf7_1px,#fbfaf7_2px)]" />
              </div>
              <PropertyEditor />
            </div>
            <div className="flex h-[6px] shrink-0 items-center justify-center">
              <GripH wide />
            </div>
            <Console />
          </div>
        </div>
        <StatusBar />
      </div>
    </div>
  );
}
